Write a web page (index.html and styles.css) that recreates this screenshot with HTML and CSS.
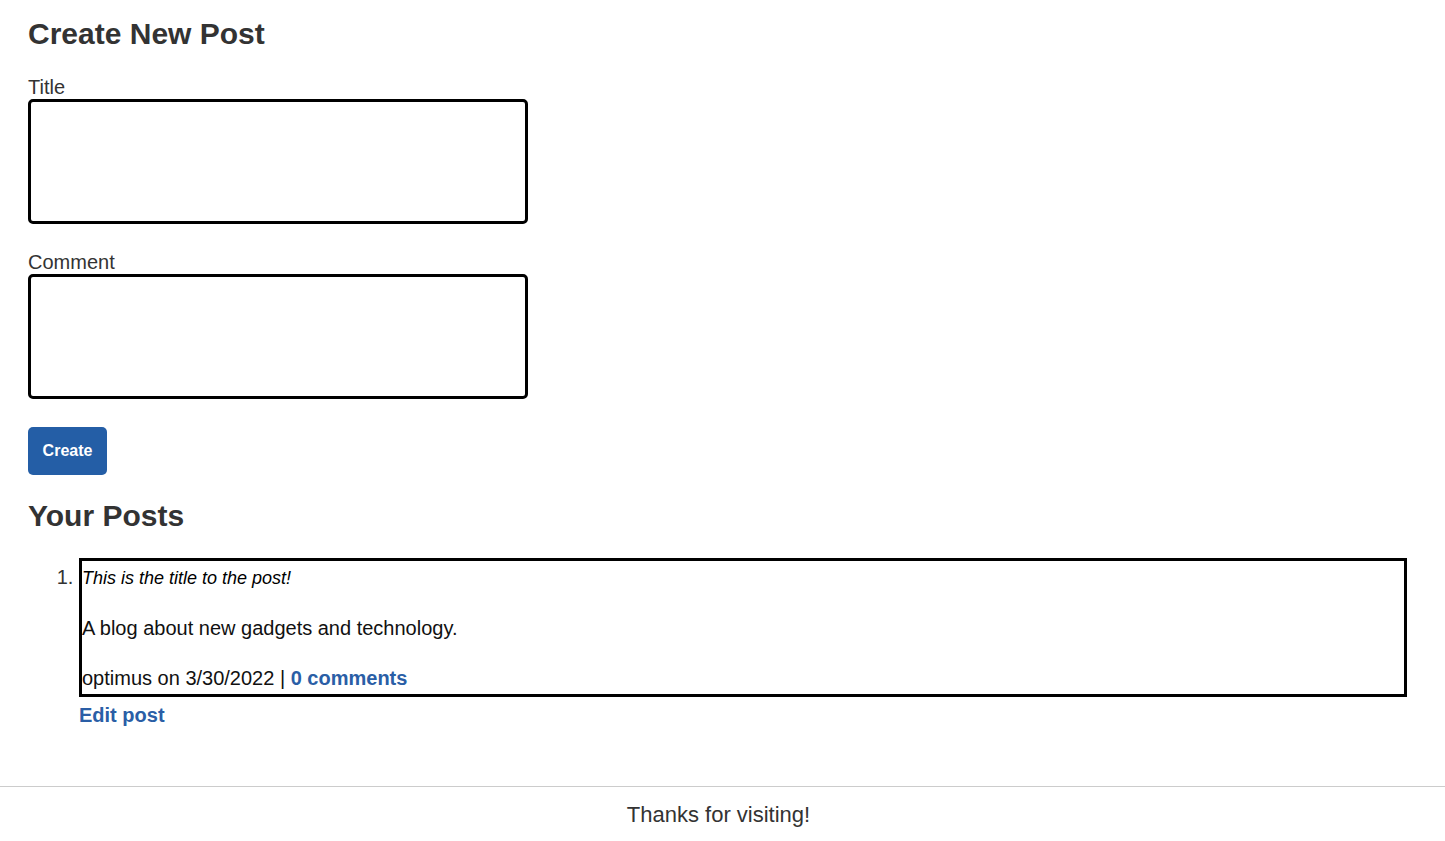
FILE: index.html
```html
<!DOCTYPE html>
<html lang="en">
<head>
<meta charset="utf-8">
<title>Create New Post</title>
<link rel="stylesheet" href="styles.css">
</head>
<body>
<main class="page">
  <h2 class="heading heading-first">Create New Post</h2>
  <form class="post-form">
    <label class="field-label" for="title">Title</label>
    <textarea class="field-input" id="title"></textarea>
    <label class="field-label field-label-second" for="comment">Comment</label>
    <textarea class="field-input" id="comment"></textarea>
    <button type="button" class="btn-create">Create</button>
  </form>
  <h2 class="heading heading-posts">Your Posts</h2>
  <ol class="post-list">
    <li class="post-item">
      <div class="post-card">
        <div class="post-title"><em>This is the title to the post!</em></div>
        <p class="post-body">A blog about new gadgets and technology.</p>
        <p class="post-meta">optimus on 3/30/2022 | <a href="#" class="link">0 comments</a></p>
      </div>
      <div class="post-actions"><a href="#" class="link">Edit post</a></div>
    </li>
  </ol>
</main>
<footer class="site-footer">
  <p class="footer-text">Thanks for visiting!</p>
</footer>
</body>
</html>
```
FILE: styles.css
```css
* { box-sizing: border-box; }

body {
  margin: 0;
  font-family: "Liberation Sans", Arial, sans-serif;
  color: #333;
  background: #fff;
}

.page {
  padding: 0 38px 0 28px;
}

.heading {
  font-size: 30px;
  font-weight: bold;
  line-height: 34px;
  margin: 0;
  color: #333;
}

.heading-first { padding-top: 17px; }

.post-form {
  display: flex;
  flex-direction: column;
  align-items: flex-start;
  margin-top: 25px;
}

.field-label {
  font-size: 20px;
  line-height: 23px;
  color: #333;
}

.field-label-second { margin-top: 27px; }

.field-input {
  width: 500px;
  height: 125px;
  border: 3px solid #000;
  border-radius: 5px;
  resize: none;
  font-family: inherit;
  font-size: 16px;
  margin: 0;
  padding: 4px;
  outline: none;
}

.btn-create {
  margin-top: 28px;
  width: 79px;
  height: 48px;
  background: #245ea6;
  color: #fff;
  border: none;
  border-radius: 5px;
  font-family: inherit;
  font-size: 16px;
  font-weight: bold;
  padding: 0;
}

.heading-posts { margin-top: 24px; }

.post-list {
  margin: 25px 0 0;
  padding-left: 51px;
  font-size: 20px;
  line-height: 30px;
  color: #333;
}

.post-item { padding-left: 0; }

.post-item::marker { color: #333; }

.post-card {
  border: 3px solid #000;
  color: #111;
  padding-bottom: 1px;
}

.post-title {
  font-size: 18px;
  line-height: 30px;
  padding-top: 2px;
  color: #000;
}

.post-body {
  margin: 20px 0 0;
}

.post-meta {
  margin: 20px 0 0;
}

.link {
  color: #2a5ea6;
  font-weight: bold;
  text-decoration: none;
}

.post-actions {
  margin-top: 3px;
}

.site-footer {
  margin-top: 56px;
  border-top: 1px solid #ccc;
}

.footer-text {
  margin: 15px 0 0;
  padding-right: 8px;
  text-align: center;
  font-size: 22px;
  line-height: 25px;
  color: #333;
}
```
